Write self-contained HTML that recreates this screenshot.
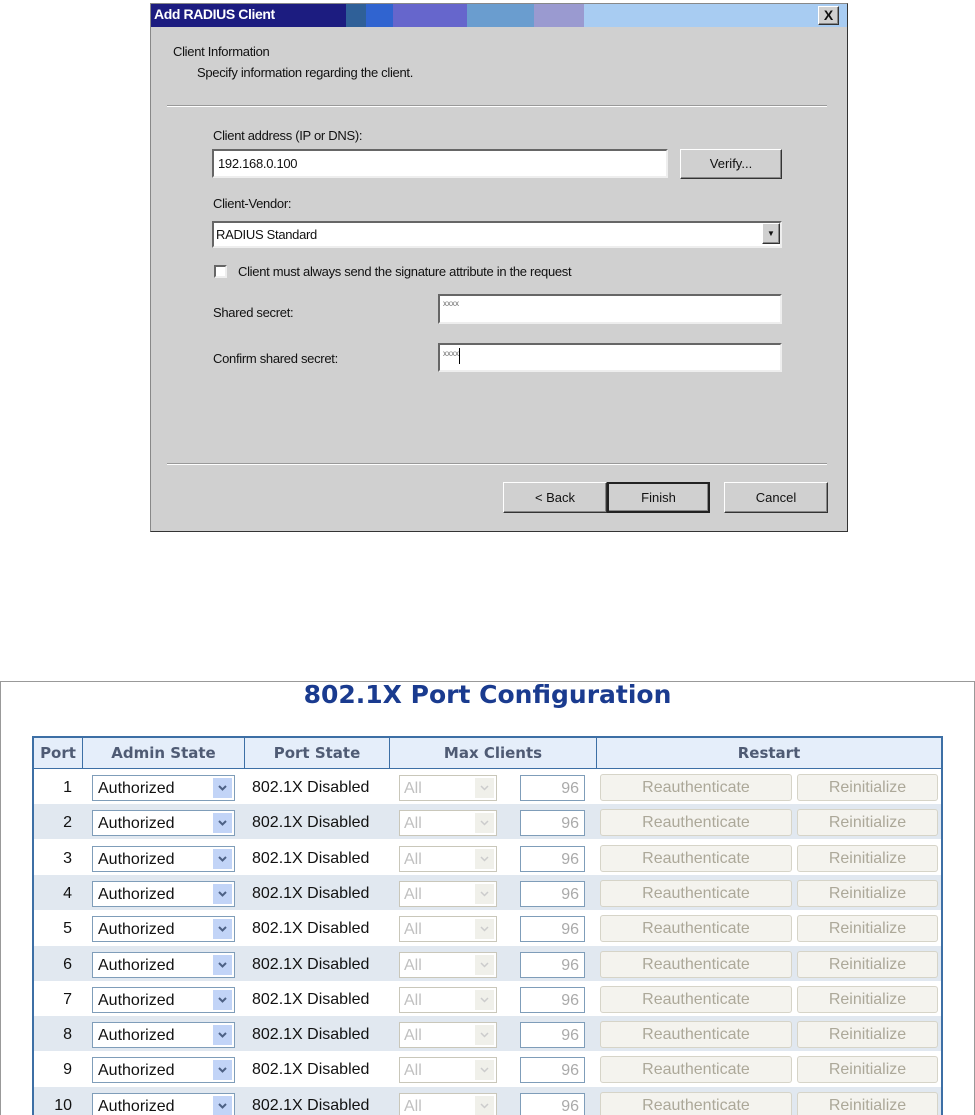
<!DOCTYPE html>
<html><head><meta charset="utf-8"><style>
*{box-sizing:border-box;margin:0;padding:0}
html,body{width:975px;height:1115px;overflow:hidden}
body{background:#fff;position:relative;font-family:"Liberation Sans",Arial,sans-serif}
.a{position:absolute}
.dlg{left:150px;top:3px;width:698px;height:529px;background:#d0d0d0;border:1px solid #888;border-right-color:#333;border-bottom-color:#333}
.t{font-size:13px;color:#111;letter-spacing:-0.3px}
.in{background:#fff;border:2px solid;border-color:#666 #eee #eee #666}
.btn{background:#d0d0d0;border:1px solid;border-color:#fff #333 #333 #fff;box-shadow:inset -1px -1px 0 #888;font-size:13px;text-align:center;color:#111}
.frame{left:0;top:681px;width:975px;height:440px;border:1px solid #999}
.row{position:absolute;left:34px;width:907px;height:35px;font-size:16px;color:#111}
.row.alt{background:#e1e8f0}
.c{position:absolute;top:0;height:35px;line-height:37px}
.sel{position:absolute;top:6px;left:58px;width:143px;height:26px;background:#fff;border:1px solid #7f9db9;font-size:16px;line-height:25px;padding-left:5px}
.ar{position:absolute;right:2px;top:2px;width:19px;height:20px;background:#c2d4f7}
.ar svg{position:absolute;left:5px;top:7px}
.dsel{position:absolute;top:6px;left:365px;width:98px;height:26px;background:#fff;border:1px solid #c9c7ba;color:#c0c0c0;line-height:25px;padding-left:4px}
.dsel .ar{background:#f0f0ea}
.num{position:absolute;top:6px;left:486px;width:65px;height:26px;background:#fff;border:1px solid #7f9db9;color:#aaa;text-align:right;padding-right:5px;line-height:25px}
.b1,.b2{position:absolute;top:5px;height:27px;background:#f4f3ee;border:1px solid #d6d4c8;border-radius:3px;color:#aca899;text-align:center;line-height:26px}
.b1{left:566px;width:192px}.b2{left:763px;width:141px}
</style></head><body>
<div class="a dlg"></div>
<div class="a" style="left:151px;top:4px;width:696px;height:23px;background:linear-gradient(90deg,#1c1c80 0,#1c1c80 195px,#2f6098 195px,#2f6098 215px,#3064d0 215px,#3064d0 242px,#6666cc 242px,#6666cc 316px,#6a9dcf 316px,#6a9dcf 383px,#9a9ad0 383px,#9a9ad0 433px,#a8ccf2 433px)"></div>
<div class="a" style="left:154px;top:6px;color:#fff;font-weight:bold;font-size:14px;letter-spacing:-0.4px">Add RADIUS Client</div>
<div class="a btn" style="left:818px;top:6px;width:21px;height:19px;font-size:14px;font-weight:bold;line-height:17px">X</div>
<div class="a t" style="left:173px;top:44px">Client Information</div>
<div class="a t" style="left:197px;top:65px">Specify information regarding the client.</div>
<div class="a" style="left:167px;top:105px;width:660px;height:2px;border-top:1px solid #999;border-bottom:1px solid #fff"></div>
<div class="a t" style="left:213px;top:128px">Client address (IP or DNS):</div>
<div class="a in t" style="left:212px;top:149px;width:456px;height:29px;padding:5px 4px">192.168.0.100</div>
<div class="a btn" style="left:680px;top:149px;width:102px;height:30px;line-height:28px">Verify...</div>
<div class="a t" style="left:213px;top:196px">Client-Vendor:</div>
<div class="a in t" style="left:212px;top:221px;width:570px;height:27px;padding:4px 2px">RADIUS Standard</div>
<div class="a btn" style="left:762px;top:223px;width:18px;height:21px;font-size:8px;line-height:19px">▼</div>
<div class="a in" style="left:214px;top:265px;width:13px;height:13px"></div>
<div class="a t" style="left:238px;top:264px">Client must always send the signature attribute in the request</div>
<div class="a t" style="left:213px;top:305px">Shared secret:</div>
<div class="a in" style="left:438px;top:294px;width:344px;height:30px;font-size:8px;color:#666;padding:3px">xxxx</div>
<div class="a t" style="left:213px;top:351px">Confirm shared secret:</div>
<div class="a in" style="left:438px;top:343px;width:344px;height:29px;font-size:8px;color:#666;padding:3px">xxxx<span style="display:inline-block;width:1px;height:16px;background:#000;vertical-align:-8px"></span></div>
<div class="a" style="left:167px;top:463px;width:660px;height:2px;border-top:1px solid #999;border-bottom:1px solid #fff"></div>
<div class="a btn" style="left:503px;top:482px;width:104px;height:31px;line-height:29px">&lt; Back</div>
<div class="a btn" style="left:607px;top:482px;width:103px;height:31px;line-height:27px;border:2px solid #222">Finish</div>
<div class="a btn" style="left:724px;top:482px;width:104px;height:31px;line-height:29px">Cancel</div>

<div class="a frame"></div>
<div class="a" style="left:0;top:680px;width:975px;text-align:center;font-family:'DejaVu Sans',sans-serif;font-weight:bold;font-size:25px;color:#1a3b8f">802.1X Port Configuration</div>
<div class="a" style="left:32px;top:736px;width:911px;height:390px;border:2px solid #3d6fa5;border-bottom:none"></div>
<div class="a" style="left:34px;top:738px;width:907px;height:31px;background:#e5eefa;border-bottom:1px solid #3d6fa5;font-family:'DejaVu Sans',sans-serif;font-weight:bold;font-size:15px;color:#4f5b74">
<div class="c" style="left:0;width:49px;height:31px;line-height:30px;text-align:center;border-right:1px solid #3d6fa5">Port</div>
<div class="c" style="left:49px;width:162px;height:31px;line-height:30px;text-align:center;border-right:1px solid #3d6fa5">Admin State</div>
<div class="c" style="left:211px;width:145px;height:31px;line-height:30px;text-align:center;border-right:1px solid #3d6fa5">Port State</div>
<div class="c" style="left:356px;width:207px;height:31px;line-height:30px;text-align:center;border-right:1px solid #3d6fa5">Max Clients</div>
<div class="c" style="left:563px;width:344px;height:31px;line-height:30px;text-align:center">Restart</div>
</div>
<div class="row" style="top:769px"><div class="c" style="left:0;width:38px;text-align:right">1</div><div class="sel">Authorized<div class="ar"><svg width="9" height="6"><path d="M1 1L4.5 4.5L8 1" stroke="#4d6185" stroke-width="2" fill="none"/></svg></div></div><div class="c" style="left:218px">802.1X Disabled</div><div class="dsel">All<div class="ar"><svg width="9" height="6"><path d="M1 1L4.5 4.5L8 1" stroke="#ccc" stroke-width="1.5" fill="none"/></svg></div></div><div class="num">96</div><div class="b1">Reauthenticate</div><div class="b2">Reinitialize</div></div>
<div class="row alt" style="top:804px"><div class="c" style="left:0;width:38px;text-align:right">2</div><div class="sel">Authorized<div class="ar"><svg width="9" height="6"><path d="M1 1L4.5 4.5L8 1" stroke="#4d6185" stroke-width="2" fill="none"/></svg></div></div><div class="c" style="left:218px">802.1X Disabled</div><div class="dsel">All<div class="ar"><svg width="9" height="6"><path d="M1 1L4.5 4.5L8 1" stroke="#ccc" stroke-width="1.5" fill="none"/></svg></div></div><div class="num">96</div><div class="b1">Reauthenticate</div><div class="b2">Reinitialize</div></div>
<div class="row" style="top:840px"><div class="c" style="left:0;width:38px;text-align:right">3</div><div class="sel">Authorized<div class="ar"><svg width="9" height="6"><path d="M1 1L4.5 4.5L8 1" stroke="#4d6185" stroke-width="2" fill="none"/></svg></div></div><div class="c" style="left:218px">802.1X Disabled</div><div class="dsel">All<div class="ar"><svg width="9" height="6"><path d="M1 1L4.5 4.5L8 1" stroke="#ccc" stroke-width="1.5" fill="none"/></svg></div></div><div class="num">96</div><div class="b1">Reauthenticate</div><div class="b2">Reinitialize</div></div>
<div class="row alt" style="top:875px"><div class="c" style="left:0;width:38px;text-align:right">4</div><div class="sel">Authorized<div class="ar"><svg width="9" height="6"><path d="M1 1L4.5 4.5L8 1" stroke="#4d6185" stroke-width="2" fill="none"/></svg></div></div><div class="c" style="left:218px">802.1X Disabled</div><div class="dsel">All<div class="ar"><svg width="9" height="6"><path d="M1 1L4.5 4.5L8 1" stroke="#ccc" stroke-width="1.5" fill="none"/></svg></div></div><div class="num">96</div><div class="b1">Reauthenticate</div><div class="b2">Reinitialize</div></div>
<div class="row" style="top:910px"><div class="c" style="left:0;width:38px;text-align:right">5</div><div class="sel">Authorized<div class="ar"><svg width="9" height="6"><path d="M1 1L4.5 4.5L8 1" stroke="#4d6185" stroke-width="2" fill="none"/></svg></div></div><div class="c" style="left:218px">802.1X Disabled</div><div class="dsel">All<div class="ar"><svg width="9" height="6"><path d="M1 1L4.5 4.5L8 1" stroke="#ccc" stroke-width="1.5" fill="none"/></svg></div></div><div class="num">96</div><div class="b1">Reauthenticate</div><div class="b2">Reinitialize</div></div>
<div class="row alt" style="top:946px"><div class="c" style="left:0;width:38px;text-align:right">6</div><div class="sel">Authorized<div class="ar"><svg width="9" height="6"><path d="M1 1L4.5 4.5L8 1" stroke="#4d6185" stroke-width="2" fill="none"/></svg></div></div><div class="c" style="left:218px">802.1X Disabled</div><div class="dsel">All<div class="ar"><svg width="9" height="6"><path d="M1 1L4.5 4.5L8 1" stroke="#ccc" stroke-width="1.5" fill="none"/></svg></div></div><div class="num">96</div><div class="b1">Reauthenticate</div><div class="b2">Reinitialize</div></div>
<div class="row" style="top:981px"><div class="c" style="left:0;width:38px;text-align:right">7</div><div class="sel">Authorized<div class="ar"><svg width="9" height="6"><path d="M1 1L4.5 4.5L8 1" stroke="#4d6185" stroke-width="2" fill="none"/></svg></div></div><div class="c" style="left:218px">802.1X Disabled</div><div class="dsel">All<div class="ar"><svg width="9" height="6"><path d="M1 1L4.5 4.5L8 1" stroke="#ccc" stroke-width="1.5" fill="none"/></svg></div></div><div class="num">96</div><div class="b1">Reauthenticate</div><div class="b2">Reinitialize</div></div>
<div class="row alt" style="top:1016px"><div class="c" style="left:0;width:38px;text-align:right">8</div><div class="sel">Authorized<div class="ar"><svg width="9" height="6"><path d="M1 1L4.5 4.5L8 1" stroke="#4d6185" stroke-width="2" fill="none"/></svg></div></div><div class="c" style="left:218px">802.1X Disabled</div><div class="dsel">All<div class="ar"><svg width="9" height="6"><path d="M1 1L4.5 4.5L8 1" stroke="#ccc" stroke-width="1.5" fill="none"/></svg></div></div><div class="num">96</div><div class="b1">Reauthenticate</div><div class="b2">Reinitialize</div></div>
<div class="row" style="top:1051px"><div class="c" style="left:0;width:38px;text-align:right">9</div><div class="sel">Authorized<div class="ar"><svg width="9" height="6"><path d="M1 1L4.5 4.5L8 1" stroke="#4d6185" stroke-width="2" fill="none"/></svg></div></div><div class="c" style="left:218px">802.1X Disabled</div><div class="dsel">All<div class="ar"><svg width="9" height="6"><path d="M1 1L4.5 4.5L8 1" stroke="#ccc" stroke-width="1.5" fill="none"/></svg></div></div><div class="num">96</div><div class="b1">Reauthenticate</div><div class="b2">Reinitialize</div></div>
<div class="row alt" style="top:1087px"><div class="c" style="left:0;width:38px;text-align:right">10</div><div class="sel">Authorized<div class="ar"><svg width="9" height="6"><path d="M1 1L4.5 4.5L8 1" stroke="#4d6185" stroke-width="2" fill="none"/></svg></div></div><div class="c" style="left:218px">802.1X Disabled</div><div class="dsel">All<div class="ar"><svg width="9" height="6"><path d="M1 1L4.5 4.5L8 1" stroke="#ccc" stroke-width="1.5" fill="none"/></svg></div></div><div class="num">96</div><div class="b1">Reauthenticate</div><div class="b2">Reinitialize</div></div>
</body></html>
